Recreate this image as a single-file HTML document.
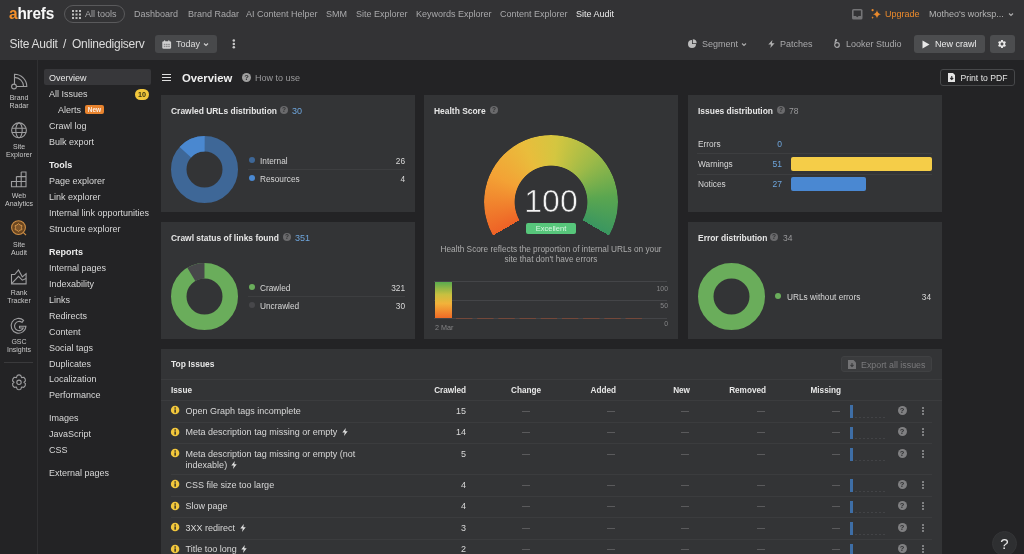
<!DOCTYPE html>
<html><head><meta charset="utf-8">
<style>
*{margin:0;padding:0;box-sizing:border-box}
html,body{width:1024px;height:554px;overflow:hidden;background:#232325;font-family:"Liberation Sans",sans-serif;color:#e4e4e4}
.a{position:absolute}
.t{position:absolute;white-space:nowrap;line-height:12px;height:12px;font-size:9px;margin-top:1px}
.hdr{position:absolute;left:0;top:0;width:1024px;height:60px;background:#333335}
.nav{color:#a9a9ab}
.rail{position:absolute;left:0;top:60px;width:38px;height:494px;border-right:1px solid #303032}
.rl{position:absolute;left:0;width:38px;text-align:center;font-size:7px;line-height:8px;color:#c8c8c8}
.sb{color:#d8d8d8}
.bold{font-weight:bold}
.card{position:absolute;background:#333436}
.ct{font-weight:bold;color:#e6e6e6;font-size:8.45px}
.blue{color:#6ea5dc}
.gray{color:#9a9a9c}
.qi{position:absolute;width:8px;height:8px;border-radius:50%;background:#6a6a6c;margin-top:0.4px}
.qi:after{content:"?";position:absolute;left:0;top:0;width:100%;line-height:8px;text-align:center;font-size:6.5px;font-weight:bold;color:#303133}
.q9{width:9px;height:9px;background:#808082}
.q9:after{line-height:9.5px;font-size:7.5px;color:#2e2f31}
</style></head><body>
<div id="wrap" style="position:absolute;left:0;top:0;width:1024px;height:554px;will-change:transform">
<div class="hdr"></div>
<!-- top row -->
<div class="a" style="left:9px;top:5.3px;font-size:17px;line-height:17px;font-weight:bold;white-space:nowrap;transform:scaleX(0.905);transform-origin:0 0;letter-spacing:-0.2px"><span style="color:#f6902a">a</span><span style="color:#f8f8f8">hrefs</span></div>
<div class="a" style="left:64px;top:5px;width:61px;height:18px;border:1px solid #5a5a5c;border-radius:9px"></div>
<svg class="a" style="left:72px;top:10px" width="9" height="9" viewBox="0 0 9 9" fill="#bdbdbd"><rect x="0" y="0" width="2" height="2"/><rect x="3.5" y="0" width="2" height="2"/><rect x="7" y="0" width="2" height="2"/><rect x="0" y="3.5" width="2" height="2"/><rect x="3.5" y="3.5" width="2" height="2"/><rect x="7" y="3.5" width="2" height="2"/><rect x="0" y="7" width="2" height="2"/><rect x="3.5" y="7" width="2" height="2"/><rect x="7" y="7" width="2" height="2"/></svg>
<div class="t nav" style="left:85px;top:7.4px">All tools</div>
<div class="t nav" style="left:134px;top:7.4px">Dashboard</div>
<div class="t nav" style="left:188px;top:7.4px">Brand Radar</div>
<div class="t nav" style="left:246px;top:7.4px">AI Content Helper</div>
<div class="t nav" style="left:326px;top:7.4px">SMM</div>
<div class="t nav" style="left:356px;top:7.4px">Site Explorer</div>
<div class="t nav" style="left:416px;top:7.4px">Keywords Explorer</div>
<div class="t nav" style="left:500px;top:7.4px">Content Explorer</div>
<div class="t" style="left:576px;top:7.4px;color:#ececec">Site Audit</div>
<!-- right top -->
<svg class="a" style="left:852px;top:9px" width="10.5" height="10.5" viewBox="0 0 10.5 10.5"><rect x="0" y="0" width="10.5" height="10.5" rx="1.6" fill="#747476"/><path d="M1.6 1.6 H8.9 V7 H6.6 L5.25 8.3 L3.9 7 H1.6 Z" fill="#333335"/></svg>
<svg class="a" style="left:870px;top:8px" width="12" height="12" viewBox="0 0 12 12" fill="#e8892c"><path d="M7 2 Q7.4 5.6 11 6.3 Q7.4 7 7 10.6 Q6.6 7 3 6.3 Q6.6 5.6 7 2Z"/><circle cx="2.6" cy="2.2" r="1.1"/><path d="M2.6 8.2 Q2.75 9.4 3.9 9.6 Q2.75 9.8 2.6 11 Q2.45 9.8 1.3 9.6 Q2.45 9.4 2.6 8.2Z"/></svg>
<div class="t" style="left:885px;top:7.4px;color:#eb8a2c">Upgrade</div>
<div class="t nav" style="left:929px;top:7.4px;color:#b4b4b4">Motheo's worksp...</div>
<svg class="a" style="left:1008px;top:12px" width="6" height="5" viewBox="0 0 6 5"><path d="M1 1.5 L3 3.5 L5 1.5" stroke="#aaa" stroke-width="1.1" fill="none"/></svg>
<!-- second row -->
<div class="t" style="left:9.5px;top:35.5px;font-size:12px;letter-spacing:-0.25px;line-height:14px;height:14px;color:#dcdcdc">Site Audit</div><div class="t" style="left:63px;top:35.5px;font-size:12px;line-height:14px;height:14px;color:#dcdcdc">/</div><div class="t" style="left:72px;top:35.5px;font-size:12px;letter-spacing:-0.25px;line-height:14px;height:14px;color:#dcdcdc">Onlinedigiserv</div>
<div class="a" style="left:155px;top:35px;width:62px;height:18px;background:#48494b;border-radius:3px"></div>
<svg class="a" style="left:162px;top:39.5px" width="9.5" height="9" viewBox="0 0 9.5 9"><rect x="0.3" y="1.2" width="8.8" height="7.6" rx="1.3" fill="#cfcfcf"/><rect x="2" y="0.2" width="1.2" height="2" rx="0.5" fill="#cfcfcf"/><rect x="6.2" y="0.2" width="1.2" height="2" rx="0.5" fill="#cfcfcf"/><g fill="#8a8a8c"><rect x="1.8" y="3.8" width="1.6" height="1.3"/><rect x="4" y="3.8" width="1.6" height="1.3"/><rect x="6.2" y="3.8" width="1.6" height="1.3"/><rect x="1.8" y="5.8" width="1.6" height="1.3"/><rect x="4" y="5.8" width="1.6" height="1.3"/><rect x="6.2" y="5.8" width="1.6" height="1.3"/></g></svg>
<div class="t" style="left:176px;top:37px;color:#dedede">Today</div>
<svg class="a" style="left:203px;top:42px" width="6" height="5" viewBox="0 0 6 5"><path d="M1 1.5 L3 3.5 L5 1.5" stroke="#ccc" stroke-width="1.1" fill="none"/></svg>
<svg class="a" style="left:231px;top:38px" width="6" height="11" viewBox="0 0 6 11" fill="#c8c8c8"><circle cx="2.8" cy="2.5" r="1.25"/><circle cx="2.8" cy="5.9" r="1.25"/><circle cx="2.8" cy="9.2" r="1.25"/></svg>
<!-- right second row -->
<svg class="a" style="left:687px;top:39px" width="10" height="10" viewBox="0 0 10 10"><path d="M5 1 A4 4 0 1 0 9 5 L5 5Z" fill="#bdbdbd"/><path d="M5.8 0.3 A4 4 0 0 1 9.7 4.2 L5.8 4.2Z" fill="#bdbdbd"/></svg>
<div class="t nav" style="left:702px;top:37px">Segment</div>
<svg class="a" style="left:741px;top:42px" width="6" height="5" viewBox="0 0 6 5"><path d="M1 1.5 L3 3.5 L5 1.5" stroke="#aaa" stroke-width="1.1" fill="none"/></svg>
<svg class="a" style="left:768px;top:40px" width="7" height="8" viewBox="0 0 7 8"><path d="M4.4 0 L0.3 4.6 L3 4.6 L2.3 8 L6.6 3.2 L3.9 3.2Z" fill="#b0b0b0"/></svg>
<div class="t nav" style="left:780px;top:37px">Patches</div>
<svg class="a" style="left:833px;top:38px" width="8" height="11" viewBox="0 0 8 11"><circle cx="4" cy="7" r="2.3" stroke="#a9a9ab" stroke-width="1.2" fill="none"/><path d="M2.2 5.6 Q1.6 3.6 3.2 2.6" stroke="#a9a9ab" stroke-width="1.2" fill="none"/><circle cx="3.1" cy="2.2" r="1.1" fill="#a9a9ab"/></svg>
<div class="t nav" style="left:846px;top:37px">Looker Studio</div>
<div class="a" style="left:914px;top:35px;width:71px;height:18px;background:#4c4d4f;border-radius:3px"></div>
<svg class="a" style="left:922px;top:40px" width="8" height="9" viewBox="0 0 8 9"><path d="M0.5 0.5 L7.5 4.5 L0.5 8.5Z" fill="#e8e8e8"/></svg>
<div class="t" style="left:935px;top:37px;color:#ececec">New crawl</div>
<div class="a" style="left:990px;top:35px;width:24.5px;height:18px;background:#4c4d4f;border-radius:3px"></div>
<svg class="a" style="left:997px;top:39px" width="10" height="10" viewBox="0 0 24 24"><path fill="#e8e8e8" d="M19.14 12.94c.04-.3.06-.61.06-.94 0-.32-.02-.64-.07-.94l2.03-1.58a.49.49 0 0 0 .12-.61l-1.92-3.32a.488.488 0 0 0-.59-.22l-2.39.96c-.5-.38-1.03-.7-1.62-.94l-.36-2.54a.484.484 0 0 0-.48-.41h-3.84c-.24 0-.43.17-.47.41l-.36 2.54c-.59.24-1.13.57-1.62.94l-2.39-.96c-.22-.08-.47 0-.59.22L2.74 8.87c-.12.21-.08.47.12.61l2.03 1.58c-.05.3-.09.63-.09.94s.02.64.07.94l-2.03 1.58a.49.49 0 0 0-.12.61l1.92 3.32c.12.22.37.29.59.22l2.39-.96c.5.38 1.03.7 1.62.94l.36 2.54c.05.24.24.41.48.41h3.84c.24 0 .44-.17.47-.41l.36-2.54c.59-.24 1.13-.56 1.62-.94l2.39.96c.22.08.47 0 .59-.22l1.92-3.32c.12-.22.07-.47-.12-.61l-2.01-1.58zM12 15.6c-1.98 0-3.6-1.62-3.6-3.6s1.62-3.6 3.6-3.6 3.6 1.62 3.6 3.6-1.62 3.6-3.6 3.6z"/></svg>

<!-- left rail -->
<div class="rail"></div>
<svg class="a" style="left:0;top:60px" width="38" height="340" viewBox="0 60 38 340">
<g fill="none" stroke="#9e9ea0" stroke-width="1.1">
<!-- brand radar -->
<path d="M14.5 86.5 V74.2 A12.3 12.3 0 0 1 26.8 86.5 Z"/>
<path d="M14.5 77.4 A9.1 9.1 0 0 1 23.6 86.5"/>
<circle cx="14" cy="86.5" r="2.4" fill="#232325"/>
<!-- globe -->
<circle cx="19" cy="130.3" r="7.4"/>
<ellipse cx="19" cy="130.3" rx="3.2" ry="7.4"/>
<path d="M11.8 128.2 H26.2 M11.8 132.5 H26.2"/>
<!-- web analytics -->
<path d="M11.5 181.5 H26 V186.8 H11.5 Z M16.4 176.6 H26 V181.5 M21.2 172 H26 V176.6 M21.2 172 V186.8 M16.4 176.6 V186.8"/>
<!-- rank tracker -->
<path d="M11.5 274.5 H14.7 L18.5 270 L22.3 276.8 L26.1 273.6 V283.9 H11.5 Z"/>
<path d="M11.9 283.4 L18.5 276.4 L22.3 280.2 L26.1 278.4"/>
<!-- gsc -->
<path d="M23.6 320.4 A7.4 7.4 0 1 0 25.9 326.2 H19.5 V328 H23.3 A4.6 4.6 0 1 1 22 322.4 Z"/>
<!-- settings -->
<circle cx="19" cy="382.3" r="2.2"/>
</g>
<path fill="none" stroke="#9e9ea0" stroke-width="1.1" d="M17.2 375.5 Q19 374.2 20.8 375.5 L21.6 377.6 L23.8 377.3 Q25.8 378.8 25.4 381 L24 382.3 L25.4 383.6 Q25.8 385.8 23.8 387.3 L21.6 387 L20.8 389.1 Q19 390.4 17.2 389.1 L16.4 387 L14.2 387.3 Q12.2 385.8 12.6 383.6 L14 382.3 L12.6 381 Q12.2 378.8 14.2 377.3 L16.4 377.6 Z"/>
<!-- site audit -->
<circle cx="18.5" cy="227.6" r="6.9" fill="#6a4620" stroke="#cf8f46" stroke-width="1.1"/>
<path d="M23.4 232.6 L26 235.2" stroke="#cf8f46" stroke-width="1.2"/>
<path fill="#80562a" stroke="#d8984e" stroke-width="0.9" stroke-linejoin="round" d="M18.50 223.60 L20.00 225.00 L21.96 225.60 L21.50 227.60 L21.96 229.60 L20.00 230.20 L18.50 231.60 L17.00 230.20 L15.04 229.60 L15.50 227.60 L15.04 225.60 L17.00 225.00Z"/>
</svg>
<div class="rl" style="top:94px;line-height:7.8px">Brand<br>Radar</div>
<div class="rl" style="top:143px;line-height:7.8px">Site<br>Explorer</div>
<div class="rl" style="top:192px;line-height:7.8px">Web<br>Analytics</div>
<div class="rl" style="top:241px;line-height:7.8px">Site<br>Audit</div>
<div class="rl" style="top:289px;line-height:7.8px">Rank<br>Tracker</div>
<div class="rl" style="top:338px;line-height:7.8px">GSC<br>Insights</div>
<div class="a" style="left:4px;top:362px;width:29px;height:1px;background:#3a3a3c"></div>

<!-- sidebar -->
<div class="a" style="left:44px;top:69px;width:107px;height:16px;background:#37373a;border-radius:2px"></div>
<div class="t sb" style="left:49px;top:71px;color:#e8e8e8">Overview</div>
<div class="t sb" style="left:49px;top:87px">All Issues</div>
<div class="a" style="left:135px;top:88.5px;width:14px;height:11px;border-radius:5.5px;background:#f2c73c;color:#3a3410;font-size:7.2px;font-weight:bold;line-height:11px;text-align:center">10</div>
<div class="t sb" style="left:58px;top:103px">Alerts</div>
<div class="a" style="left:85px;top:105px;width:19px;height:9px;border-radius:2px;background:#e8832e;color:#fbece0;font-size:6.5px;font-weight:bold;line-height:9px;text-align:center">New</div>
<div class="t sb" style="left:49px;top:119px">Crawl log</div>
<div class="t sb" style="left:49px;top:135px">Bulk export</div>
<div class="t bold" style="left:49px;top:158px;color:#ececec">Tools</div>
<div class="t sb" style="left:49px;top:174px">Page explorer</div>
<div class="t sb" style="left:49px;top:190px">Link explorer</div>
<div class="t sb" style="left:49px;top:206px">Internal link opportunities</div>
<div class="t sb" style="left:49px;top:222px">Structure explorer</div>
<div class="t bold" style="left:49px;top:245px;color:#ececec">Reports</div>
<div class="t sb" style="left:49px;top:261px">Internal pages</div>
<div class="t sb" style="left:49px;top:277px">Indexability</div>
<div class="t sb" style="left:49px;top:293px">Links</div>
<div class="t sb" style="left:49px;top:309px">Redirects</div>
<div class="t sb" style="left:49px;top:325px">Content</div>
<div class="t sb" style="left:49px;top:341px">Social tags</div>
<div class="t sb" style="left:49px;top:357px">Duplicates</div>
<div class="t sb" style="left:49px;top:372px">Localization</div>
<div class="t sb" style="left:49px;top:388px">Performance</div>
<div class="t sb" style="left:49px;top:411px">Images</div>
<div class="t sb" style="left:49px;top:427px">JavaScript</div>
<div class="t sb" style="left:49px;top:443px">CSS</div>
<div class="t sb" style="left:49px;top:466px">External pages</div>

<!-- main heading -->
<div class="a" style="left:162px;top:74px;width:9px;height:1.3px;background:#e0e0e0;box-shadow:0 3px 0 #e0e0e0,0 6px 0 #e0e0e0"></div>
<div class="t bold" style="left:182px;top:71px;font-size:11.3px;line-height:13px;height:13px;color:#f0f0f0">Overview</div>
<div class="qi q9" style="left:242px;top:72.5px;background:#a0a0a0"></div>
<div class="t gray" style="left:255px;top:71px">How to use</div>
<div class="a" style="left:940px;top:69px;width:74.5px;height:17px;border:1px solid #47484a;border-radius:3px"></div>
<svg class="a" style="left:947.6px;top:73.2px" width="7.5" height="9" viewBox="0 0 7.5 9"><path d="M0 0 H5 L7.5 2.5 V9 H0Z" fill="#e4e4e4"/><path d="M3.75 3 V6.4 M2.3 5 L3.75 6.5 L5.2 5" stroke="#2a2a2c" stroke-width="1.1" fill="none"/></svg>
<div class="t" style="left:960.5px;top:71px;color:#e4e4e4;font-size:8.65px">Print to PDF</div>

<!-- Crawled URLs distribution -->
<div class="card" style="left:161px;top:95px;width:254px;height:117px"></div>
<div class="t ct" style="left:171px;top:104px">Crawled URLs distribution</div>
<div class="qi" style="left:280px;top:106px"></div>
<div class="t blue" style="left:292px;top:104px">30</div>
<svg class="a" style="left:171px;top:136px" width="67" height="67" viewBox="0 0 67 67">
<circle cx="33.5" cy="33.5" r="25.75" fill="none" stroke="#3e6797" stroke-width="15.5"/>
<circle cx="33.5" cy="33.5" r="25.75" fill="none" stroke="#4a88d0" stroke-width="15.5" stroke-dasharray="21.57 200" transform="rotate(-138 33.5 33.5)"/>
</svg>
<div class="a" style="left:249px;top:157px;width:6px;height:6px;border-radius:50%;background:#3e6797"></div>
<div class="t sb" style="left:260px;top:153.5px;font-size:8.3px">Internal</div>
<div class="t sb" style="left:385px;top:153.5px;width:20px;text-align:right;font-size:8.3px">26</div>
<div class="a" style="left:248px;top:169px;width:157px;height:1px;background:#3d3e40"></div>
<div class="a" style="left:249px;top:175px;width:6px;height:6px;border-radius:50%;background:#4a88d0"></div>
<div class="t sb" style="left:260px;top:171.5px;font-size:8.3px">Resources</div>
<div class="t sb" style="left:385px;top:171.5px;width:20px;text-align:right;font-size:8.3px">4</div>

<!-- Crawl status -->
<div class="card" style="left:161px;top:222px;width:254px;height:117px"></div>
<div class="t ct" style="left:171px;top:231px">Crawl status of links found</div>
<div class="qi" style="left:283px;top:233px"></div>
<div class="t blue" style="left:295px;top:231px">351</div>
<svg class="a" style="left:171px;top:263px" width="67" height="67" viewBox="0 0 67 67">
<circle cx="33.5" cy="33.5" r="25.75" fill="none" stroke="#6aad5b" stroke-width="15.5"/>
<circle cx="33.5" cy="33.5" r="25.75" fill="none" stroke="#47474a" stroke-width="15.5" stroke-dasharray="13.8 200" transform="rotate(-120.8 33.5 33.5)"/>
</svg>
<div class="a" style="left:249px;top:284px;width:6px;height:6px;border-radius:50%;background:#6aad5b"></div>
<div class="t sb" style="left:260px;top:280.5px;font-size:8.3px">Crawled</div>
<div class="t sb" style="left:375px;top:280.5px;width:30px;text-align:right;font-size:8.3px">321</div>
<div class="a" style="left:248px;top:296px;width:157px;height:1px;background:#3d3e40"></div>
<div class="a" style="left:249px;top:302px;width:6px;height:6px;border-radius:50%;background:#47474a"></div>
<div class="t sb" style="left:260px;top:298.5px;font-size:8.3px">Uncrawled</div>
<div class="t sb" style="left:375px;top:298.5px;width:30px;text-align:right;font-size:8.3px">30</div>

<!-- Health Score -->
<div class="card" style="left:424px;top:95px;width:254px;height:244px"></div>
<div class="t ct" style="left:434px;top:104px">Health Score</div>
<div class="qi" style="left:490px;top:106px"></div>
<div class="a" style="left:484px;top:135px;width:134px;height:134px;border-radius:50%;background:conic-gradient(from 240deg,#ee6226 0deg,#f3a235 55deg,#e9bd3c 95deg,#d4c640 125deg,#9dba48 165deg,#5aa650 205deg,#3a9660 240deg,transparent 240deg);-webkit-mask:radial-gradient(circle,transparent 36px,#000 36.8px);mask:radial-gradient(circle,transparent 36px,#000 36.8px)"></div>
<div class="t" style="left:501px;top:183px;width:100px;text-align:center;font-size:32px;line-height:34px;height:34px;color:#f4f4f4;-webkit-text-stroke:0.6px #333436">100</div>
<div class="a" style="left:526px;top:223px;width:50px;height:11px;border-radius:2px;background:#57c67b;color:#d6f6e0;font-size:7.5px;line-height:11px;text-align:center">Excellent</div>
<div class="t gray" style="left:424px;top:242.5px;width:254px;text-align:center;color:#acacac;font-size:8.25px">Health Score reflects the proportion of internal URLs on your</div>
<div class="t gray" style="left:424px;top:252.5px;width:254px;text-align:center;color:#acacac;font-size:8.25px">site that don't have errors</div>
<div class="a" style="left:434px;top:281px;width:233px;height:1px;background:#444548"></div>
<div class="a" style="left:434px;top:300px;width:233px;height:1px;background:#444548"></div>
<div class="a" style="left:434px;top:318px;width:233px;height:1px;background:#444548"></div>
<div class="a" style="left:435px;top:282px;width:17px;height:36px;background:linear-gradient(to bottom,#5aab4e 0%,#c8c040 35%,#f2b23a 60%,#f06a26 100%)"></div>
<div class="a" style="left:456px;top:318px;width:187px;height:1px;background-image:linear-gradient(to right,#74483a 0 16.5px,transparent 16.5px 21.2px);background-size:21.2px 1px"></div>
<div class="t gray" style="left:637px;top:282.4px;width:31px;text-align:right;font-size:6.9px;color:#858587">100</div>
<div class="t gray" style="left:637px;top:299.3px;width:31px;text-align:right;font-size:6.9px;color:#858587">50</div>
<div class="t gray" style="left:637px;top:317.3px;width:31px;text-align:right;font-size:6.9px;color:#858587">0</div>
<div class="t gray" style="left:435px;top:321px;font-size:7.2px;color:#858587">2 Mar</div>

<!-- Issues distribution -->
<div class="card" style="left:688px;top:95px;width:253.5px;height:117px"></div>
<div class="t ct" style="left:698px;top:104px">Issues distribution</div>
<div class="qi" style="left:777px;top:106px"></div>
<div class="t gray" style="left:789px;top:104px;font-size:8.5px">78</div>
<div class="t sb" style="left:698px;top:137px;font-size:8.3px">Errors</div>
<div class="t blue" style="left:752px;top:137px;width:30px;text-align:right;font-size:8.5px">0</div>
<div class="a" style="left:697px;top:153px;width:235px;height:1px;background:#3d3e40"></div>
<div class="t sb" style="left:698px;top:157px;font-size:8.3px">Warnings</div>
<div class="t blue" style="left:752px;top:157px;width:30px;text-align:right;font-size:8.5px">51</div>
<div class="a" style="left:791px;top:157px;width:141px;height:14px;border-radius:2px;background:#f5cd48"></div>
<div class="a" style="left:697px;top:174px;width:235px;height:1px;background:#3d3e40"></div>
<div class="t sb" style="left:698px;top:177px;font-size:8.3px">Notices</div>
<div class="t blue" style="left:752px;top:177px;width:30px;text-align:right;font-size:8.5px">27</div>
<div class="a" style="left:791px;top:177px;width:75px;height:14px;border-radius:2px;background:#4a88d2"></div>

<!-- Error distribution -->
<div class="card" style="left:688px;top:222px;width:253.5px;height:117px"></div>
<div class="t ct" style="left:698px;top:231px">Error distribution</div>
<div class="qi" style="left:770px;top:233px"></div>
<div class="t gray" style="left:783px;top:231px;font-size:8.5px">34</div>
<svg class="a" style="left:698px;top:263px" width="67" height="67" viewBox="0 0 67 67">
<circle cx="33.5" cy="33.5" r="25.75" fill="none" stroke="#6aad5b" stroke-width="15.5"/>
</svg>
<div class="a" style="left:775px;top:293px;width:6px;height:6px;border-radius:50%;background:#6aad5b"></div>
<div class="t sb" style="left:787px;top:289.5px;font-size:8.3px">URLs without errors</div>
<div class="t sb" style="left:901px;top:289.5px;width:30px;text-align:right;font-size:8.3px">34</div>

<!-- Top issues -->
<div class="card" style="left:161px;top:349px;width:781px;height:219px"></div>
<div class="t ct" style="left:171px;top:357px">Top Issues</div>
<div class="a" style="left:841px;top:356px;width:91px;height:16px;border-radius:3px;background:#3a3b3d;border:1px solid #404143"></div>
<svg class="a" style="left:848px;top:360px" width="8" height="9" viewBox="0 0 8 9"><path d="M0 0 H5.5 L8 2.5 V9 H0Z" fill="#737375"/><path d="M4 3 V6.3 M2.5 5 L4 6.5 L5.5 5" stroke="#3a3b3d" stroke-width="1.1" fill="none"/></svg>
<div class="t" style="left:861px;top:357.5px;color:#7a7a7c;font-size:8.85px">Export all issues</div>
<div class="a" style="left:161px;top:379px;width:781px;height:1px;background:#3b3c3e"></div>
<div class="t bold" style="left:171px;top:384px;font-size:8.2px;color:#e8e8e8">Issue</div>
<div class="t bold" style="left:416px;top:384px;width:50px;text-align:right;font-size:8.2px;color:#e8e8e8">Crawled</div>
<div class="t bold" style="left:491px;top:384px;width:50px;text-align:right;font-size:8.2px;color:#e8e8e8">Change</div>
<div class="t bold" style="left:566px;top:384px;width:50px;text-align:right;font-size:8.2px;color:#e8e8e8">Added</div>
<div class="t bold" style="left:640px;top:384px;width:50px;text-align:right;font-size:8.2px;color:#e8e8e8">New</div>
<div class="t bold" style="left:716px;top:384px;width:50px;text-align:right;font-size:8.2px;color:#e8e8e8">Removed</div>
<div class="t bold" style="left:791px;top:384px;width:50px;text-align:right;font-size:8.2px;color:#e8e8e8">Missing</div>
<div class="a" style="left:161px;top:400px;width:781px;height:1px;background:#3b3c3e"></div>

<svg class="a" style="left:170px;top:405.2px" width="10" height="10" viewBox="0 0 10 10"><circle cx="5.1" cy="5" r="4.25" fill="#f2c73c"/><rect x="4.4" y="2.3" width="1.5" height="1.4" fill="#3a3526"/><rect x="4.4" y="4.4" width="1.5" height="3.3" fill="#3a3526"/></svg>
<div class="t sb" style="left:185.6px;top:403.5px">Open Graph tags incomplete</div>
<div class="t sb" style="left:436px;top:403.5px;width:30px;text-align:right">15</div>
<div class="a" style="left:522px;top:410.5px;width:8px;height:1px;background:#5a5a5c"></div>
<div class="a" style="left:607px;top:410.5px;width:8px;height:1px;background:#5a5a5c"></div>
<div class="a" style="left:681px;top:410.5px;width:8px;height:1px;background:#5a5a5c"></div>
<div class="a" style="left:757px;top:410.5px;width:8px;height:1px;background:#5a5a5c"></div>
<div class="a" style="left:832px;top:410.5px;width:8px;height:1px;background:#5a5a5c"></div>
<div class="a" style="left:850.2px;top:405.0px;width:3.3px;height:12.5px;background:#3e6ea6"></div>
<div class="a" style="left:854.5px;top:416.5px;width:32px;height:1px;background-image:linear-gradient(to right,#424346 0 2.5px,transparent 2.5px 4px);background-size:4px 1px"></div>
<div class="qi q9" style="left:897.5px;top:405.6px"></div>
<div class="a" style="left:922px;top:406.5px;width:2px;height:2px;border-radius:50%;background:#9a9a9c;box-shadow:0 3px 0 #9a9a9c,0 6px 0 #9a9a9c"></div>
<div class="a" style="left:171px;top:421.5px;width:761px;height:1px;background:#3b3c3e"></div>
<svg class="a" style="left:170px;top:426.7px" width="10" height="10" viewBox="0 0 10 10"><circle cx="5.1" cy="5" r="4.25" fill="#f2c73c"/><rect x="4.4" y="2.3" width="1.5" height="1.4" fill="#3a3526"/><rect x="4.4" y="4.4" width="1.5" height="3.3" fill="#3a3526"/></svg>
<div class="t sb" style="left:185.6px;top:425.0px">Meta description tag missing or empty</div>
<svg class="a" style="left:342px;top:428.0px" width="6" height="8" viewBox="0 0 6 8"><path d="M3.8 0 L0.3 4.6 L2.7 4.6 L2 8 L5.7 3.2 L3.3 3.2Z" fill="#e0e0e0"/></svg>
<div class="t sb" style="left:436px;top:425.0px;width:30px;text-align:right">14</div>
<div class="a" style="left:522px;top:432.0px;width:8px;height:1px;background:#5a5a5c"></div>
<div class="a" style="left:607px;top:432.0px;width:8px;height:1px;background:#5a5a5c"></div>
<div class="a" style="left:681px;top:432.0px;width:8px;height:1px;background:#5a5a5c"></div>
<div class="a" style="left:757px;top:432.0px;width:8px;height:1px;background:#5a5a5c"></div>
<div class="a" style="left:832px;top:432.0px;width:8px;height:1px;background:#5a5a5c"></div>
<div class="a" style="left:850.2px;top:426.5px;width:3.3px;height:12.5px;background:#3e6ea6"></div>
<div class="a" style="left:854.5px;top:438.0px;width:32px;height:1px;background-image:linear-gradient(to right,#424346 0 2.5px,transparent 2.5px 4px);background-size:4px 1px"></div>
<div class="qi q9" style="left:897.5px;top:427.1px"></div>
<div class="a" style="left:922px;top:428.0px;width:2px;height:2px;border-radius:50%;background:#9a9a9c;box-shadow:0 3px 0 #9a9a9c,0 6px 0 #9a9a9c"></div>
<div class="a" style="left:171px;top:443.0px;width:761px;height:1px;background:#3b3c3e"></div>
<svg class="a" style="left:170px;top:448.2px" width="10" height="10" viewBox="0 0 10 10"><circle cx="5.1" cy="5" r="4.25" fill="#f2c73c"/><rect x="4.4" y="2.3" width="1.5" height="1.4" fill="#3a3526"/><rect x="4.4" y="4.4" width="1.5" height="3.3" fill="#3a3526"/></svg>
<div class="t sb" style="left:185.6px;top:446.5px">Meta description tag missing or empty (not</div>
<div class="t sb" style="left:185.6px;top:457.5px">indexable)</div>
<svg class="a" style="left:231px;top:460.5px" width="6" height="8" viewBox="0 0 6 8"><path d="M3.8 0 L0.3 4.6 L2.7 4.6 L2 8 L5.7 3.2 L3.3 3.2Z" fill="#e0e0e0"/></svg>
<div class="t sb" style="left:436px;top:446.5px;width:30px;text-align:right">5</div>
<div class="a" style="left:522px;top:453.5px;width:8px;height:1px;background:#5a5a5c"></div>
<div class="a" style="left:607px;top:453.5px;width:8px;height:1px;background:#5a5a5c"></div>
<div class="a" style="left:681px;top:453.5px;width:8px;height:1px;background:#5a5a5c"></div>
<div class="a" style="left:757px;top:453.5px;width:8px;height:1px;background:#5a5a5c"></div>
<div class="a" style="left:832px;top:453.5px;width:8px;height:1px;background:#5a5a5c"></div>
<div class="a" style="left:850.2px;top:448.0px;width:3.3px;height:12.5px;background:#3e6ea6"></div>
<div class="a" style="left:854.5px;top:459.5px;width:32px;height:1px;background-image:linear-gradient(to right,#424346 0 2.5px,transparent 2.5px 4px);background-size:4px 1px"></div>
<div class="qi q9" style="left:897.5px;top:448.6px"></div>
<div class="a" style="left:922px;top:449.5px;width:2px;height:2px;border-radius:50%;background:#9a9a9c;box-shadow:0 3px 0 #9a9a9c,0 6px 0 #9a9a9c"></div>
<div class="a" style="left:171px;top:474px;width:761px;height:1px;background:#3b3c3e"></div>
<svg class="a" style="left:170px;top:479.2px" width="10" height="10" viewBox="0 0 10 10"><circle cx="5.1" cy="5" r="4.25" fill="#f2c73c"/><rect x="4.4" y="2.3" width="1.5" height="1.4" fill="#3a3526"/><rect x="4.4" y="4.4" width="1.5" height="3.3" fill="#3a3526"/></svg>
<div class="t sb" style="left:185.6px;top:477.5px">CSS file size too large</div>
<div class="t sb" style="left:436px;top:477.5px;width:30px;text-align:right">4</div>
<div class="a" style="left:522px;top:484.5px;width:8px;height:1px;background:#5a5a5c"></div>
<div class="a" style="left:607px;top:484.5px;width:8px;height:1px;background:#5a5a5c"></div>
<div class="a" style="left:681px;top:484.5px;width:8px;height:1px;background:#5a5a5c"></div>
<div class="a" style="left:757px;top:484.5px;width:8px;height:1px;background:#5a5a5c"></div>
<div class="a" style="left:832px;top:484.5px;width:8px;height:1px;background:#5a5a5c"></div>
<div class="a" style="left:850.2px;top:479.0px;width:3.3px;height:12.5px;background:#3e6ea6"></div>
<div class="a" style="left:854.5px;top:490.5px;width:32px;height:1px;background-image:linear-gradient(to right,#424346 0 2.5px,transparent 2.5px 4px);background-size:4px 1px"></div>
<div class="qi q9" style="left:897.5px;top:479.6px"></div>
<div class="a" style="left:922px;top:480.5px;width:2px;height:2px;border-radius:50%;background:#9a9a9c;box-shadow:0 3px 0 #9a9a9c,0 6px 0 #9a9a9c"></div>
<div class="a" style="left:171px;top:495.5px;width:761px;height:1px;background:#3b3c3e"></div>
<svg class="a" style="left:170px;top:500.7px" width="10" height="10" viewBox="0 0 10 10"><circle cx="5.1" cy="5" r="4.25" fill="#f2c73c"/><rect x="4.4" y="2.3" width="1.5" height="1.4" fill="#3a3526"/><rect x="4.4" y="4.4" width="1.5" height="3.3" fill="#3a3526"/></svg>
<div class="t sb" style="left:185.6px;top:499.0px">Slow page</div>
<div class="t sb" style="left:436px;top:499.0px;width:30px;text-align:right">4</div>
<div class="a" style="left:522px;top:506.0px;width:8px;height:1px;background:#5a5a5c"></div>
<div class="a" style="left:607px;top:506.0px;width:8px;height:1px;background:#5a5a5c"></div>
<div class="a" style="left:681px;top:506.0px;width:8px;height:1px;background:#5a5a5c"></div>
<div class="a" style="left:757px;top:506.0px;width:8px;height:1px;background:#5a5a5c"></div>
<div class="a" style="left:832px;top:506.0px;width:8px;height:1px;background:#5a5a5c"></div>
<div class="a" style="left:850.2px;top:500.5px;width:3.3px;height:12.5px;background:#3e6ea6"></div>
<div class="a" style="left:854.5px;top:512.0px;width:32px;height:1px;background-image:linear-gradient(to right,#424346 0 2.5px,transparent 2.5px 4px);background-size:4px 1px"></div>
<div class="qi q9" style="left:897.5px;top:501.1px"></div>
<div class="a" style="left:922px;top:502.0px;width:2px;height:2px;border-radius:50%;background:#9a9a9c;box-shadow:0 3px 0 #9a9a9c,0 6px 0 #9a9a9c"></div>
<div class="a" style="left:171px;top:517.0px;width:761px;height:1px;background:#3b3c3e"></div>
<svg class="a" style="left:170px;top:522.2px" width="10" height="10" viewBox="0 0 10 10"><circle cx="5.1" cy="5" r="4.25" fill="#f2c73c"/><rect x="4.4" y="2.3" width="1.5" height="1.4" fill="#3a3526"/><rect x="4.4" y="4.4" width="1.5" height="3.3" fill="#3a3526"/></svg>
<div class="t sb" style="left:185.6px;top:520.5px">3XX redirect</div>
<svg class="a" style="left:240px;top:523.5px" width="6" height="8" viewBox="0 0 6 8"><path d="M3.8 0 L0.3 4.6 L2.7 4.6 L2 8 L5.7 3.2 L3.3 3.2Z" fill="#e0e0e0"/></svg>
<div class="t sb" style="left:436px;top:520.5px;width:30px;text-align:right">3</div>
<div class="a" style="left:522px;top:527.5px;width:8px;height:1px;background:#5a5a5c"></div>
<div class="a" style="left:607px;top:527.5px;width:8px;height:1px;background:#5a5a5c"></div>
<div class="a" style="left:681px;top:527.5px;width:8px;height:1px;background:#5a5a5c"></div>
<div class="a" style="left:757px;top:527.5px;width:8px;height:1px;background:#5a5a5c"></div>
<div class="a" style="left:832px;top:527.5px;width:8px;height:1px;background:#5a5a5c"></div>
<div class="a" style="left:850.2px;top:522.0px;width:3.3px;height:12.5px;background:#3e6ea6"></div>
<div class="a" style="left:854.5px;top:533.5px;width:32px;height:1px;background-image:linear-gradient(to right,#424346 0 2.5px,transparent 2.5px 4px);background-size:4px 1px"></div>
<div class="qi q9" style="left:897.5px;top:522.6px"></div>
<div class="a" style="left:922px;top:523.5px;width:2px;height:2px;border-radius:50%;background:#9a9a9c;box-shadow:0 3px 0 #9a9a9c,0 6px 0 #9a9a9c"></div>
<div class="a" style="left:171px;top:538.5px;width:761px;height:1px;background:#3b3c3e"></div>
<svg class="a" style="left:170px;top:543.7px" width="10" height="10" viewBox="0 0 10 10"><circle cx="5.1" cy="5" r="4.25" fill="#f2c73c"/><rect x="4.4" y="2.3" width="1.5" height="1.4" fill="#3a3526"/><rect x="4.4" y="4.4" width="1.5" height="3.3" fill="#3a3526"/></svg>
<div class="t sb" style="left:185.6px;top:542.0px">Title too long</div>
<svg class="a" style="left:241px;top:545.0px" width="6" height="8" viewBox="0 0 6 8"><path d="M3.8 0 L0.3 4.6 L2.7 4.6 L2 8 L5.7 3.2 L3.3 3.2Z" fill="#e0e0e0"/></svg>
<div class="t sb" style="left:436px;top:542.0px;width:30px;text-align:right">2</div>
<div class="a" style="left:522px;top:549.0px;width:8px;height:1px;background:#5a5a5c"></div>
<div class="a" style="left:607px;top:549.0px;width:8px;height:1px;background:#5a5a5c"></div>
<div class="a" style="left:681px;top:549.0px;width:8px;height:1px;background:#5a5a5c"></div>
<div class="a" style="left:757px;top:549.0px;width:8px;height:1px;background:#5a5a5c"></div>
<div class="a" style="left:832px;top:549.0px;width:8px;height:1px;background:#5a5a5c"></div>
<div class="a" style="left:850.2px;top:543.5px;width:3.3px;height:12.5px;background:#3e6ea6"></div>
<div class="a" style="left:854.5px;top:555.0px;width:32px;height:1px;background-image:linear-gradient(to right,#424346 0 2.5px,transparent 2.5px 4px);background-size:4px 1px"></div>
<div class="qi q9" style="left:897.5px;top:544.1px"></div>
<div class="a" style="left:922px;top:545.0px;width:2px;height:2px;border-radius:50%;background:#9a9a9c;box-shadow:0 3px 0 #9a9a9c,0 6px 0 #9a9a9c"></div>
<div class="a" style="left:171px;top:560.0px;width:761px;height:1px;background:#3b3c3e"></div>
<!-- help -->
<div class="a" style="left:992px;top:531px;width:25px;height:25px;border-radius:50%;background:#2e2f31;border:1px solid #343537"></div><div class="t" style="left:992px;top:534px;width:25px;text-align:center;font-size:15px;line-height:17px;height:17px;color:#e8e8e8">?</div>
</div>
</body></html>
